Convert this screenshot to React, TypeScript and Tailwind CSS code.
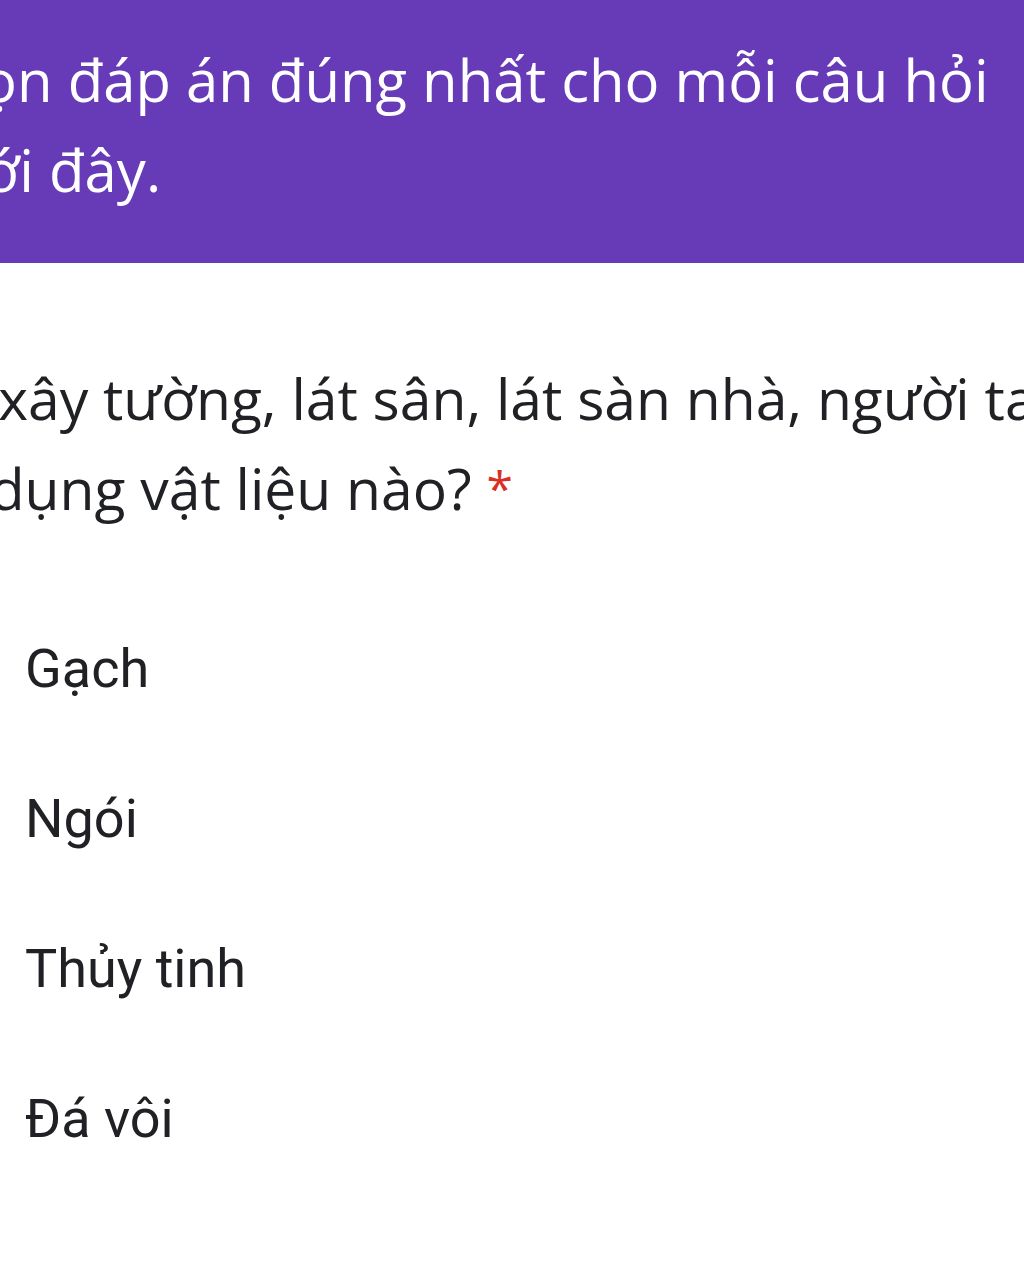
const options = ["Gạch", "Ngói", "Thủy tinh", "Đá vôi"];

export default function App() {
  return (
    <div className="w-[1024px] h-[1277px] overflow-hidden bg-white">
      <div className="h-[263px] bg-[#673ab7] pt-[35px] overflow-hidden">
        <div className="ml-[-90px] text-white text-[58px] leading-[90px] whitespace-nowrap font-['Open_Sans',sans-serif]">
          <div>Chọn đáp án đúng nhất cho mỗi câu hỏi</div>
          <div>dưới đây.</div>
        </div>
      </div>
      <div className="pt-[90px] overflow-hidden">
        <div className="ml-[-90px] text-[#202124] text-[57px] leading-[90px] whitespace-nowrap font-['Open_Sans',sans-serif]">
          <div>Để xây tường, lát sân, lát sàn nhà, người ta</div>
          <div>
            sử dụng vật liệu nào? <span className="text-[#d93025] text-[48px] align-top">*</span>
          </div>
        </div>
      </div>
      <div className="mt-[60px] flex flex-col pl-[25px] font-['Roboto',sans-serif] text-[54px] text-[#202124]">
        {options.map((o) => (
          <div key={o} className="h-[150px] flex items-center">
            {o}
          </div>
        ))}
      </div>
    </div>
  );
}
